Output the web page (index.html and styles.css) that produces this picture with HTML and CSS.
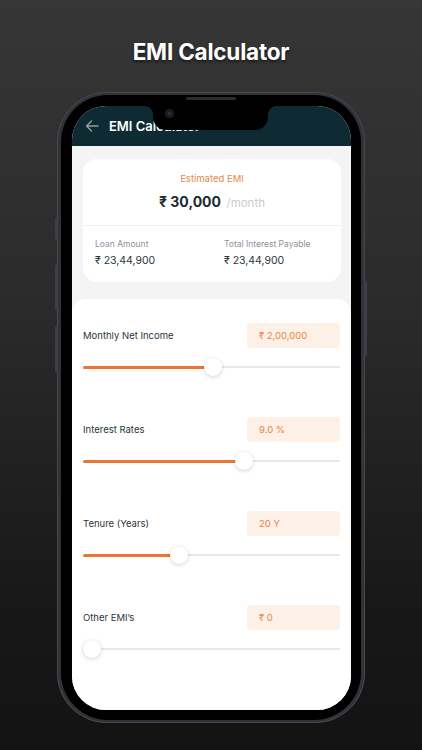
FILE: index.html
```html
<!DOCTYPE html>
<html>
<head>
<meta charset="utf-8">
<link rel="stylesheet" href="styles.css">
</head>
<body>
<h1 class="headline">EMI Calculator</h1>
<div class="phone">
  <span class="btn btn-l1"></span>
  <span class="btn btn-l2"></span>
  <span class="btn btn-l3"></span>
  <span class="btn btn-r1"></span>
  <span class="speaker"></span>
  <div class="bezel">
    <div class="screen">
      <div class="notch"><span class="camera"></span></div>
      <header class="appbar">
        <svg class="back" width="14" height="12" viewBox="0 0 14 12"><path d="M13 6H1.5M6.5 1L1.5 6l5 5" fill="none" stroke="#8fa2a7" stroke-width="1.4" stroke-linecap="round" stroke-linejoin="round"/></svg>
        <span class="appbar-title">EMI Calculator</span>
      </header>
      <main class="content">
        <section class="summary">
          <div class="summary-top">
            <div class="est-label">Estimated EMI</div>
            <div class="est-value"><b>₹ 30,000</b> <span class="per">/month</span></div>
          </div>
          <div class="summary-bottom">
            <div class="stat">
              <div class="stat-label">Loan Amount</div>
              <div class="stat-value">₹ 23,44,900</div>
            </div>
            <div class="stat">
              <div class="stat-label">Total Interest Payable</div>
              <div class="stat-value">₹ 23,44,900</div>
            </div>
          </div>
        </section>
        <section class="inputs">
          <div class="field">
            <div class="field-head">
              <span class="field-label">Monthly Net Income</span>
              <span class="field-box">₹ 2,00,000</span>
            </div>
            <div class="slider"><span class="fill" style="width:130px"></span><span class="thumb"></span><span class="rest"></span></div>
          </div>
          <div class="field">
            <div class="field-head">
              <span class="field-label">Interest Rates</span>
              <span class="field-box">9.0 %</span>
            </div>
            <div class="slider"><span class="fill" style="width:161px"></span><span class="thumb"></span><span class="rest"></span></div>
          </div>
          <div class="field">
            <div class="field-head">
              <span class="field-label">Tenure (Years)</span>
              <span class="field-box">20 Y</span>
            </div>
            <div class="slider"><span class="fill" style="width:96px"></span><span class="thumb"></span><span class="rest"></span></div>
          </div>
          <div class="field">
            <div class="field-head">
              <span class="field-label">Other EMI’s</span>
              <span class="field-box">₹ 0</span>
            </div>
            <div class="slider"><span class="fill" style="width:9px"></span><span class="thumb"></span><span class="rest"></span></div>
          </div>
        </section>
      </main>
    </div>
  </div>
</div>
</body>
</html>
```

FILE: styles.css
```css
* { box-sizing: border-box; }
html, body { margin: 0; padding: 0; }
body {
  width: 422px;
  height: 750px;
  overflow: hidden;
  background: linear-gradient(180deg, #363636 0%, #2b2b2b 40%, #181818 80%, #131313 100%);
  font-family: "Inter", "Noto Sans", sans-serif;
  color: #27323a;
}
.headline {
  margin: 0;
  padding-top: 37px;
  height: 92px;
  text-align: center;
  font-size: 22.5px;
  font-weight: 700;
  letter-spacing: -0.2px;
  color: #ffffff;
  line-height: 30px;
  text-shadow: 0 2px 3px rgba(0,0,0,0.5);
}
.phone {
  position: relative;
  width: 308px;
  height: 631px;
  margin-left: 57px;
  border-radius: 50px;
  background: #2f3237;
  padding: 3px 4px 3px 4px;
  box-shadow: inset 0 0 0 1px #464950;
}
.btn {
  position: absolute;
  width: 3px;
  background: #3c3f44;
  border-radius: 1px;
}
.btn-l1 { left: -2px; top: 126px; height: 22px; }
.btn-l2 { left: -2px; top: 173px; height: 45px; }
.btn-l3 { left: -2px; top: 234px; height: 46px; }
.btn-r1 { right: -2px; top: 189px; height: 75px; }
.speaker {
  position: absolute;
  left: 129px;
  top: 5px;
  width: 50px;
  height: 3px;
  border-radius: 2px;
  background: #2a2c30;
  z-index: 3;
}
.bezel {
  height: 100%;
  background: #000;
  border-radius: 47px;
  padding: 11px 10px 10px 11px;
}
.screen {
  position: relative;
  height: 604px;
  border-radius: 34px;
  overflow: hidden;
  background: #f4f4f4;
  display: flex;
  flex-direction: column;
}
.notch {
  position: absolute;
  top: 0;
  left: 81px;
  width: 115px;
  height: 24px;
  background: #000;
  border-radius: 0 0 13px 13px;
  z-index: 2;
}
.notch::before, .notch::after {
  content: "";
  position: absolute;
  top: 0;
  width: 8px;
  height: 8px;
}
.notch::before { left: -8px; background: radial-gradient(circle at 0 100%, transparent 7.5px, #000 8px); }
.notch::after { right: -8px; background: radial-gradient(circle at 100% 100%, transparent 7.5px, #000 8px); }
.camera {
  position: absolute;
  left: 12px;
  top: 3px;
  width: 9px;
  height: 9px;
  border-radius: 50%;
  background: radial-gradient(circle, #2a2f38 0 1.5px, #15181d 2px, #1d2026 4.5px);
}
.appbar {
  height: 40px;
  flex: none;
  background: #0e2a32;
  display: flex;
  align-items: center;
  padding: 0 0 0 13px;
}
.appbar-title {
  margin-left: 10px;
  color: #ffffff;
  font-size: 13px;
  font-weight: 600;
  line-height: 16px;
  margin-top: -1px;
}
.content {
  flex: 1;
  display: flex;
  flex-direction: column;
  padding-top: 13px;
}
.summary {
  margin: 0 10px 17px 11px;
  background: #fff;
  border-radius: 14px;
  height: 123px;
  display: flex;
  flex-direction: column;
}
.summary-top {
  height: 67px;
  border-bottom: 1px solid #eeeeee;
  display: flex;
  flex-direction: column;
  align-items: center;
  padding-top: 13px;
}
.est-label {
  color: #e38a4c;
  font-size: 9.5px;
  line-height: 14px;
}
.est-value {
  margin-top: 5px;
  line-height: 20px;
  white-space: nowrap;
}
.est-value b {
  font-size: 14px;
  font-weight: 700;
  color: #1d2a31;
}
.per {
  font-size: 11.5px;
  color: #c9cccf;
  margin-left: 1px;
}
.summary-bottom {
  flex: 1;
  display: flex;
  padding: 12px 12px 0 12px;
}
.stat { flex: none; width: 129px; }
.stat-label {
  font-size: 8.5px;
  color: #8d9397;
  line-height: 13px;
}
.stat-value {
  margin-top: 2px;
  font-size: 10.5px;
  color: #2c363c;
  line-height: 16px;
}
.inputs {
  flex: 1;
  background: #fff;
  border-radius: 14px 14px 0 0;
  padding: 24px 11px 0 11px;
  display: flex;
  flex-direction: column;
  gap: 41px;
}
.field-head {
  display: flex;
  align-items: center;
  justify-content: space-between;
  height: 25px;
}
.field-label {
  font-size: 9.5px;
  color: #2b353b;
}
.field-box {
  width: 93px;
  height: 25px;
  border-radius: 4px;
  background: #fdf0e6;
  color: #e88843;
  font-size: 9.5px;
  line-height: 25px;
  padding-left: 12px;
}
.slider {
  margin-top: 10px;
  height: 18px;
  display: flex;
  align-items: center;
}
.fill {
  height: 3px;
  background: #ec7630;
  border-radius: 2px 0 0 2px;
  flex: none;
}
.thumb {
  flex: none;
  width: 18px;
  height: 18px;
  margin: 0 -9px;
  border-radius: 50%;
  background: #fff;
  box-shadow: 0 1px 4px rgba(0,0,0,0.18);
  position: relative;
  z-index: 1;
}
.rest {
  flex: 1;
  height: 2px;
  background: #e8e8e8;
}
```
